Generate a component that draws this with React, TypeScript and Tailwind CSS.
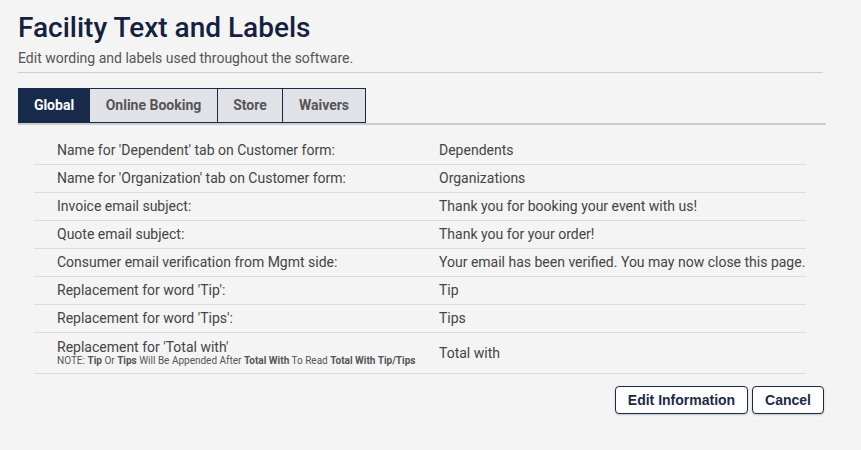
import React from 'react'

const rows: { label: React.ReactNode; value: string; tall?: boolean }[] = [
  { label: "Name for 'Dependent' tab on Customer form:", value: 'Dependents' },
  { label: "Name for 'Organization' tab on Customer form:", value: 'Organizations' },
  { label: 'Invoice email subject:', value: 'Thank you for booking your event with us!' },
  { label: 'Quote email subject:', value: 'Thank you for your order!' },
  { label: 'Consumer email verification from Mgmt side:', value: 'Your email has been verified. You may now close this page.' },
  { label: "Replacement for word 'Tip':", value: 'Tip' },
  { label: "Replacement for word 'Tips':", value: 'Tips' },
]

const tabs = ['Global', 'Online Booking', 'Store', 'Waivers']

export default function App() {
  return (
    <div className="min-h-[450px] w-[861px] bg-[#f4f4f4] pl-[18px] pt-[10px] font-['Roboto',sans-serif] text-[#444]">
      <div className="w-[805px]">
        <h1 className="text-[28px] font-medium leading-[36px] text-[#14213f]">Facility Text and Labels</h1>
        <p className="mt-[2px] text-[14px] leading-[20px] text-[#555]">
          Edit wording and labels used throughout the software.
        </p>
        <div className="mt-[4px] h-[1px] bg-[#cfcfcf]" />

        <div className="mt-[15px] w-[808px] border-b-2 border-[#cccccc]">
          <div className="flex h-[35px]">
            {tabs.map((t, i) =>
              i === 0 ? (
                <div key={t} className="flex w-[72px] items-center justify-center bg-[#172a4b] text-[14px] font-bold text-white">
                  {t}
                </div>
              ) : (
                <div
                  key={t}
                  className={
                    'flex items-center justify-center border border-[#172a4b] bg-[#e1e2e7] text-[14px] font-bold text-[#555] ' +
                    (i === 1 ? 'w-[128px] border-l-0' : i === 2 ? 'w-[65px] border-l-0' : 'w-[83px] border-l-0')
                  }
                >
                  {t}
                </div>
              )
            )}
          </div>
        </div>

        <div className="ml-[16px] mt-[12px] w-[772px]">
          {rows.map((r, i) => (
            <div key={i} className="grid h-[28px] grid-cols-[405px_1fr] items-center border-b border-[#dcdcdc] text-[14px]">
              <div className="pl-[23px]">{r.label}</div>
              <div>{r.value}</div>
            </div>
          ))}
          <div className="grid h-[41px] grid-cols-[405px_1fr] items-center border-b border-[#dcdcdc] text-[14px]">
            <div className="pl-[23px] leading-[15px]">
              <div>Replacement for 'Total with'</div>
              <div className="text-[10px] leading-[12px] text-[#555]">
                NOTE: <b>Tip</b> Or <b>Tips</b> Will Be Appended After <b>Total With</b> To Read <b>Total With Tip/Tips</b>
              </div>
            </div>
            <div>Total with</div>
          </div>
        </div>

        <div className="mt-[12px] flex justify-end gap-[4px] font-['Liberation_Sans',Arial,sans-serif]">
          <button className="h-[28px] w-[133px] rounded-[4px] border border-[#1b2a47] bg-white text-[14px] font-bold text-[#1b2a47] shadow-[0_1px_2px_rgba(0,0,0,0.2)]">
            Edit Information
          </button>
          <button className="mr-[-1px] h-[28px] w-[72px] rounded-[4px] border border-[#1b2a47] bg-white text-[14px] font-bold text-[#1b2a47] shadow-[0_1px_2px_rgba(0,0,0,0.2)]">
            Cancel
          </button>
        </div>
      </div>
    </div>
  )
}
